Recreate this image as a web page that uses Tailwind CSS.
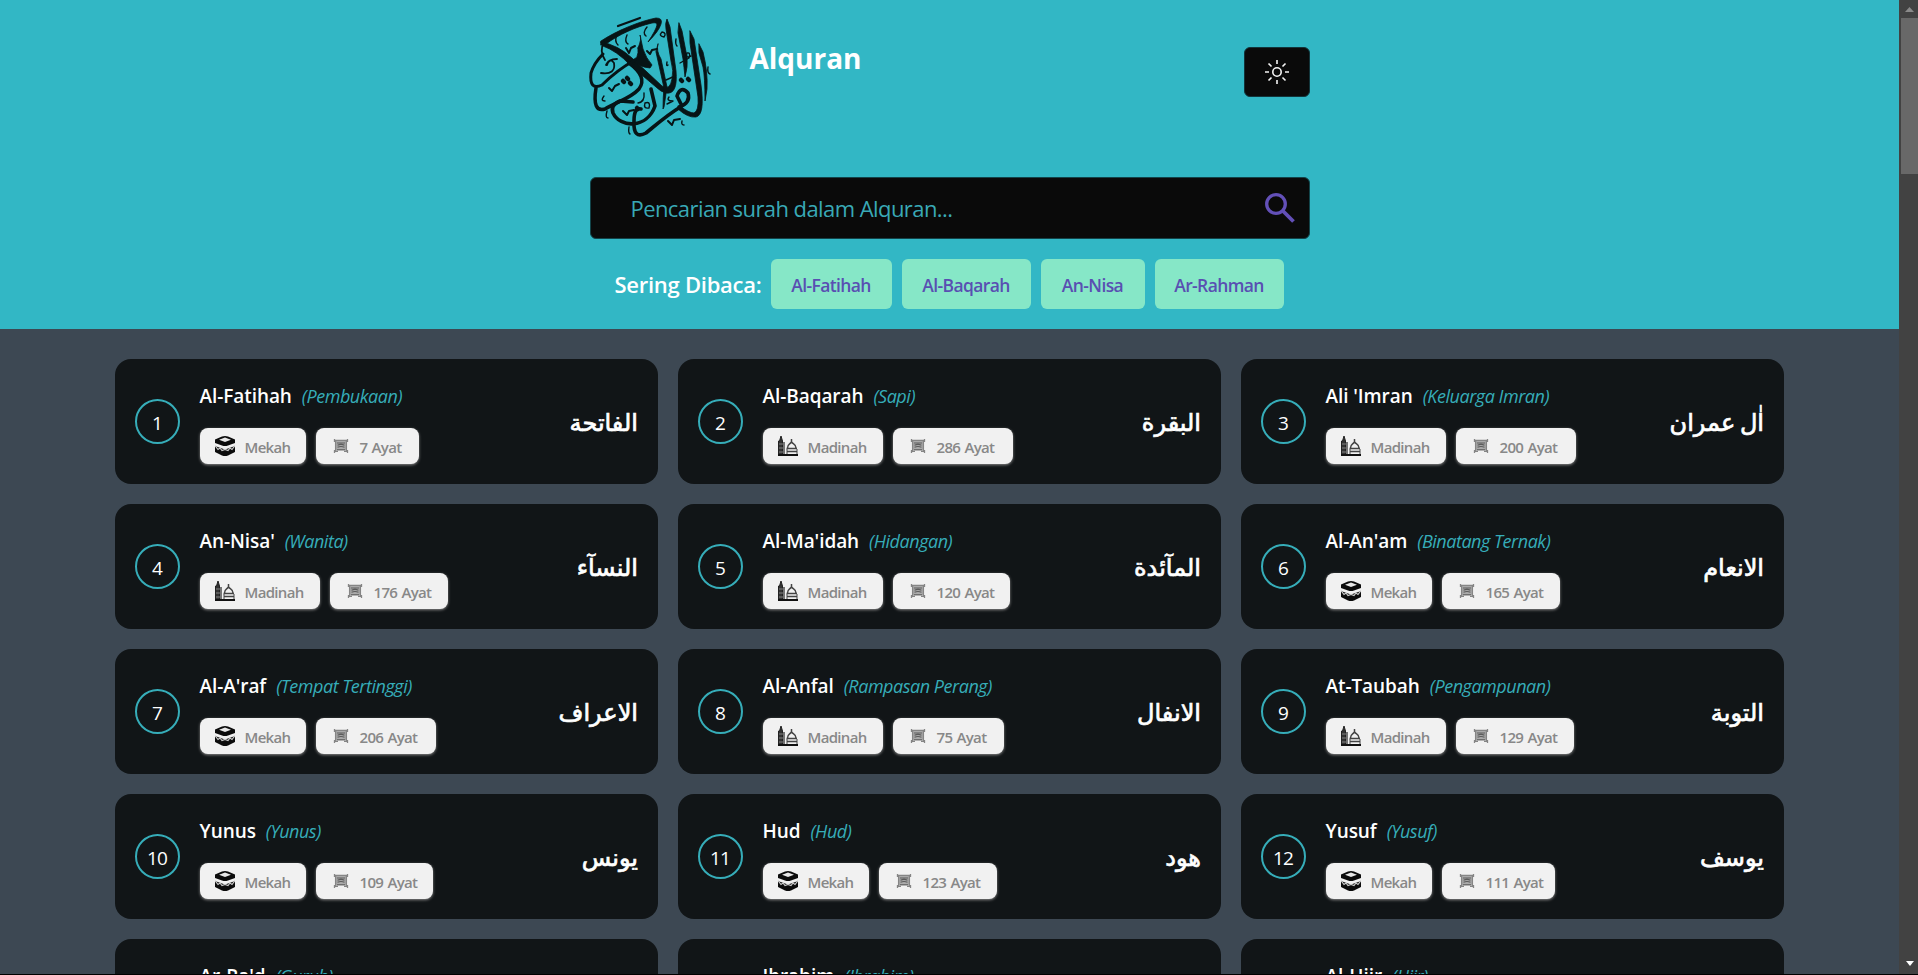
<!DOCTYPE html>
<html lang="id">
<head>
<meta charset="utf-8">
<title>Alquran</title>
<script src="https://cdn.jsdelivr.net/npm/@tailwindcss/browser@4"></script>
</head>
<body class="h-[975px] overflow-hidden bg-black font-['Open_Sans','Noto_Sans',sans-serif]">
<svg class="hidden">
  <symbol id="mekah" viewBox="0 0 20 20">
    <path d="M0 3.500 7 .5Q10 -.5 13 .5L20 3.500V7L13 9.500Q10 10.500 7 9.500L0 7Z" fill="#0c0c0c"/>
    <path d="M4 3.800 10 1.600 16 3.800 10 6Z" fill="#e8e8e8"/>
    <path d="M0 10 7 12.500Q10 13.500 13 12.500L20 10V16L13 19.500Q10 20.500 7 19.500L0 16Z" fill="#0c0c0c"/>
    <path d="M0 9.500 3 13.500 5 12 7 14.500 10 13.500 13 14.500 15 12 17 13.500 20 9.500" fill="none" stroke="#ccc" stroke-width="1.200"/>
  </symbol>
  <symbol id="madinah" viewBox="0 0 20 20">
    <path d="M.5 19V5H1.500L3 0 4.500 5V19Z" fill="#333" stroke="#222"/><path d="M1 8H5M1 12H5M1 16H5" stroke="#999" stroke-width=".8"/>
    <path d="M6 6V19" stroke="#222" stroke-width="1.200"/>
    <path d="M13.500 3V6M9.500 12C9.500 8 12 8.500 13.500 6 15 8.500 18 8 18 12M8.500 12.500H19M9 15.500H19" fill="none" stroke="#444" stroke-width="1.500"/>
    <path d="M0 19H20" stroke="#111" stroke-width="2"/><path d="M9 13V18M19 13V18" stroke="#444"/>
  </symbol>
  <symbol id="ayat" viewBox="0 0 16 16">
    <path d="M2.500 2.500H13.500V12.500H2.500Z" fill="#aaa"/>
    <path d="M1.500 1V4M14.500 1V4M1.500 2.300H14.500M2.600 3V14M13.400 3V14M1.500 12V15M14.500 12V15M1.500 13.300H5M11 13.300H14.500" fill="none" stroke="#858585" stroke-width="1.300"/>
    <path d="M4 5H12M4.500 7.200Q8 5.500 11.500 7.200M4.500 9.300Q8 7.800 11.500 9.300M4 11.800H12" fill="none" stroke="#5c5c5c" stroke-width="1.100"/>
  </symbol>
</svg>
<div class="flex h-[974px] overflow-hidden">
  <div class="w-[1899px] shrink-0 overflow-hidden bg-[#3d4853]">
    <header class="flex h-[329px] justify-center bg-[#32b7c5]">
      <div class="w-[720px] pt-[17px]">
        <div class="flex h-[160px]">
          <svg class="h-[120px] w-[120px] overflow-visible" viewBox="0 0 120 120" fill="none" stroke="#071416" stroke-linecap="round" stroke-linejoin="round">
            <g fill="#071416" stroke-width=".8">
              <path d="M11 24C26 14 50 4 66 1Q73 1 71 7Q69 14 58 25Q66 13 67 8Q67 5 62 6C45 10 28 18 16 27L11 28Z"/>
              <path d="M11 25Q28 28 42 41L72 69Q80 74 82 62Q84 54 81 44L76 12Q75 6 77 2L80 10L86 54Q88 78 76 76Q71 75 66 70L40 48Q27 34 13 29Z"/>
              <path d="M48 31Q52 22 50 18L53 32Q56 41 62 48L60 51Q49 50 42 43Q49 42 48 31Z"/>
              <path d="M68 27Q66 34 71 42L77 70L74 90L73 92Q73 80 74 71L66 35Z"/>
              <path d="M89 6 92 14 97 40Q98 50 95 60Q94 50 93 42L88 16Z"/>
              <path d="M100 14 104 22 111 68Q115 98 106 100Q98 101 88 92L90 89Q99 96 104 96Q109 94 108 80L100 26Z"/>
              <path d="M109 27 113 35Q118 55 117 72L115 84Q115 60 113 50L109 36Z"/>
            </g>
            <path d="M45 43Q27 53 12 68Q-1 74 1 56Q4 46 13 37" stroke-width="3"/>
            <path d="M39 46Q58 60 49 72C40 82 26 85 15 92Q2 96 6 71" stroke-width="3.500"/>
            <path d="M61 72 65 89C57 112 30 111 23 96Q20 88 30 84L43 85" stroke-width="3.600"/>
            <path d="M89 90Q101 86 98 76Q91 68 87 79L92 89C77 98 67 107 56 116Q43 123 44 104Q44 90 51 92" stroke-width="3.600"/>
            <path d="M28 9 50 1" stroke-width="2.200"/>
            <path d="M14 25Q9 34 15 43M27 42Q18 42 17 48M11 56Q26 58 24 46Q20 40 16 48" stroke-width="1.800"/>
            <path d="M33 64 34 65M40 66 41 67M37 61 38 62M91 63 92 64M98 62 99 63M47 91 48 92" stroke-width="4.500"/>
            <path d="M36 31 39 36 41 31 45 29M57 34 60 37 62 33 67 32M19 71 22 74 25 69 29 67M33 94 37 98 39 94 44 93M78 104 82 108 84 103 90 102" stroke-width="2"/>
            <path d="M27 18Q24 24 28 28M37 18Q34 25 38 27M57 10Q52 16 56 19M72 15Q77 16 74 20Q68 19 72 15M86 22Q85 27 87 29M77 45Q76 50 78 48M118 50Q117 56 120 57M92 104Q91 108 94 108M17 94Q15 101 18 101M39 110Q38 116 40 117M90 46 99 41Q101 35 97 36Q95 42 101 39M76 63 85 59M55 86Q61 84 59 91Q53 92 55 86M79 80Q76 84 83 84L77 87M48 86Q55 85 54 76M14 79Q10 84 15 84" stroke-width="1.400"/>
          </svg>
          <h1 class="mt-[23px] ml-[40px] text-[28px] leading-[36px] font-bold text-white">Alquran</h1>
          <button class="mt-[30px] ml-auto flex h-[50px] w-[66px] items-center justify-center rounded-md border border-[#12343a] bg-[#0a0a0a]">
            <svg class="size-6" viewBox="0 0 24 24" fill="none" stroke="#f4f4f4" stroke-width="1.600"><circle cx="12" cy="12" r="4.200"/><path d="M12 0V4M12 20V24M0 12H4M20 12H24M3.500 3.500 6.500 6.500M17.500 17.500 20.500 20.500M3.500 20.500 6.500 17.500M17.500 6.500 20.500 3.500"/></svg>
          </button>
        </div>
        <div class="flex h-[62px] items-center justify-between rounded-md border border-[#12444a] bg-[#0a0a0a] pr-[14px] pl-[40px]">
          <span class="text-[22px] tracking-[-0.026em] text-[#39a9b6]">Pencarian surah dalam Alquran...</span>
          <svg class="mb-0.5 size-[31px]" viewBox="0 0 31 31" fill="none" stroke="#6350b8"><circle cx="12" cy="12" r="9.300" stroke-width="3.300"/><path d="M18.500 18.500 29.500 29.500" stroke-width="3.800"/></svg>
        </div>
        <div class="mt-5 flex h-[50px] items-center pl-[25px] font-semibold">
          <span class="w-[156px] text-[22px] tracking-[-0.012em] whitespace-nowrap text-white">Sering Dibaca:</span>
          <div class="flex gap-[10px] text-[17.500px] tracking-[-0.035em] whitespace-nowrap text-[#594fb2]">
            <span class="flex h-[50px] w-[121px] items-center justify-center rounded-md bg-[#86e7c7] pt-0.5">Al-Fatihah</span>
            <span class="flex h-[50px] w-[129px] items-center justify-center rounded-md bg-[#86e7c7] pt-0.5">Al-Baqarah</span>
            <span class="flex h-[50px] w-[104px] items-center justify-center rounded-md bg-[#86e7c7] pt-0.5">An-Nisa</span>
            <span class="flex h-[50px] w-[129px] items-center justify-center rounded-md bg-[#86e7c7] pt-0.5">Ar-Rahman</span>
          </div>
        </div>
      </div>
    </header>
    <main id="list" class="grid grid-cols-[543px_543px_543px] gap-5 pt-[30px] pl-[115px]"></main>
  </div>
  <div class="flex w-[19px] shrink-0 flex-col items-center justify-between bg-[#424242] pl-0.5">
    <div class="w-full">
      <div class="flex h-[18px] items-center justify-center"><svg class="h-[5px] w-[9px]" viewBox="0 0 9 5"><path d="M0 5 4.500 0 9 5Z" fill="#8a8a8a"/></svg></div>
      <div class="h-[156px] bg-[#686868]"></div>
    </div>
    <svg class="mb-2 h-[5px] w-[8px]" viewBox="0 0 8 5"><path d="M0 0H8L4 5Z" fill="#fff"/></svg>
  </div>
</div>
<script>
const surahs = [
  ["Al-Fatihah","Pembukaan","k",7,"الفاتحة",103],
  ["Al-Baqarah","Sapi","d",286,"البقرة",120],
  ["Ali 'Imran","Keluarga Imran","d",200,"اٰل عمران",120],
  ["An-Nisa'","Wanita","d",176,"النسآء",118],
  ["Al-Ma'idah","Hidangan","d",120,"المآئدة",117],
  ["Al-An'am","Binatang Ternak","k",165,"الانعام",118],
  ["Al-A'raf","Tempat Tertinggi","k",206,"الاعراف",120],
  ["Al-Anfal","Rampasan Perang","d",75,"الانفال",111],
  ["At-Taubah","Pengampunan","d",129,"التوبة",118],
  ["Yunus","Yunus","k",109,"يونس",117],
  ["Hud","Hud","k",123,"هود",118],
  ["Yusuf","Yusuf","k",111,"يوسف",113],
  ["Ar-Ra'd","Guruh","d",43,"الرعد",111],
  ["Ibrahim","Ibrahim","k",52,"ابرٰهيم",111],
  ["Al-Hijr","Hijr","k",99,"الحجر",111]
];
document.getElementById("list").innerHTML = surahs.map(([name, meaning, place, count, arabic, width], i) => `
  <article class="flex h-[125px] items-center rounded-[16px] bg-[#111517] px-5">
    <div class="flex size-[45px] items-center justify-center rounded-full border-2 border-[#36adb9] pt-[3px] pr-px text-[19px] tracking-[-0.050em] text-white">${i + 1}</div>
    <div class="mt-[5px] ml-[19.500px] flex flex-col">
      <div class="flex h-6 items-center gap-[10px] whitespace-nowrap">
        <h2 class="text-[19px] font-semibold tracking-[-0.004em] text-white">${name}</h2>
        <span class="text-[18px] tracking-[-0.026em] text-[#36adb9] italic">(${meaning})</span>
      </div>
      <div class="mt-5 flex gap-[10px] text-[15px] font-semibold tracking-[-0.045em] whitespace-nowrap text-[#888] [word-spacing:1px]">
        <span class="flex h-9 ${place === "k" ? "w-[106px]" : "w-[120px]"} items-center gap-[10px] rounded-lg bg-[#f1f1f1] pl-[15px] shadow-[0_1px_3px_#888]"><svg class="size-5 shrink-0"><use href="#${place === "k" ? "mekah" : "madinah"}"/></svg><span class="pt-0.5">${place === "k" ? "Mekah" : "Madinah"}</span></span>
        <span class="flex h-9 items-center gap-[11px] rounded-lg bg-[#f1f1f1] pl-[17px] shadow-[0_1px_3px_#888]" style="width:${width}px"><svg class="size-4 shrink-0"><use href="#ayat"/></svg><span class="pt-0.5">${count} Ayat</span></span>
      </div>
    </div>
    <div class="ml-auto pt-[3px] font-['DejaVu_Sans',sans-serif] text-[24px] text-white [-webkit-text-stroke:0.7px_white] [word-spacing:-3px]" dir="rtl" lang="ar">${arabic}</div>
  </article>`).join("");
</script>
</body>
</html>
